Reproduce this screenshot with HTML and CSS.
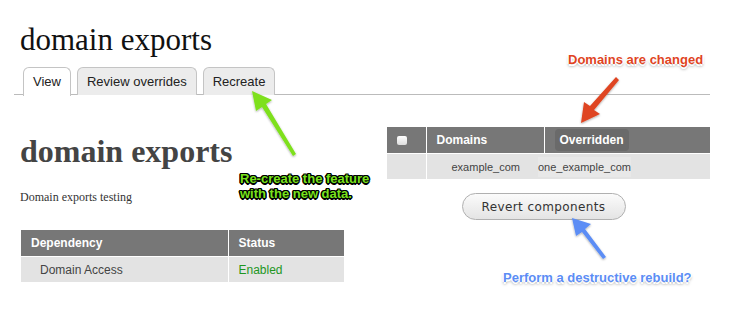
FILE: index.html
```html
<!DOCTYPE html>
<html>
<head>
<meta charset="utf-8">
<link rel="stylesheet" href="styles.css">
</head>
<body>
<div class="page">
  <h1 class="title">domain exports</h1>
  <ul class="tabs">
    <li class="tab active">View</li>
    <li class="tab">Review overrides</li>
    <li class="tab">Recreate</li>
  </ul>
  <div class="content">
    <div class="left">
      <h2 class="heading">domain exports</h2>
      <p class="desc">Domain exports testing</p>
      <table class="dep">
        <colgroup><col class="col-dep"><col></colgroup>
        <thead>
          <tr><th>Dependency</th><th>Status</th></tr>
        </thead>
        <tbody>
          <tr><td class="indent">Domain Access</td><td class="ok">Enabled</td></tr>
        </tbody>
      </table>
    </div>
    <div class="right">
      <table class="comp">
        <colgroup><col class="col-check"><col class="col-domains"><col></colgroup>
        <thead>
          <tr>
            <th><span class="checkbox"></span></th>
            <th>Domains</th>
            <th class="c-over"><span class="over-pill">Overridden</span></th>
          </tr>
        </thead>
        <tbody>
          <tr>
            <td></td>
            <td colspan="2" class="vals"><span class="v1">example_com</span><span class="v2">one_example_com</span></td>
          </tr>
        </tbody>
      </table>
      <div class="actions"><button class="btn">Revert components</button></div>
    </div>
  </div>

  <svg class="arrows" width="732" height="326" viewBox="0 0 732 326">
    <defs>
      <filter id="sh" x="-20%" y="-20%" width="140%" height="140%">
        <feDropShadow dx="0" dy="1" stdDeviation="1" flood-color="#000" flood-opacity="0.35"/>
      </filter>
    </defs>
    <path filter="url(#sh)" fill="#7ee01f" d="M252 91 L272 100 L266 104 L296 154 L293 156 L262 107 L256 111 Z"/>
    <path filter="url(#sh)" fill="#df4521" d="M581 123 L584 102 L590 106 L616 77 L619 80 L594 110 L600 114 Z"/>
    <path filter="url(#sh)" fill="#5b8df5" d="M572 218 L591 224 L585 229 L606 257 L603 259 L582 232 L576 236 Z"/>
  </svg>
  <div class="note note-red">Domains are changed</div>
  <div class="note note-green">Re-create the feature<br>with the new data.</div>
  <div class="note note-blue">Perform a destructive rebuild?</div>
</div>
</body>
</html>
```
FILE: styles.css
```css
html, body {
  margin: 0;
  padding: 0;
  background: #fff;
}
.page {
  position: relative;
  width: 732px;
  height: 326px;
  padding: 0 22px 0 14px;
  box-sizing: border-box;
  font-family: "Liberation Sans", Arial, sans-serif;
  overflow: hidden;
}
.title {
  margin: 0;
  padding: 22px 0 0 6px;
  font-family: "Liberation Serif", "Times New Roman", serif;
  font-weight: normal;
  font-size: 31px;
  line-height: 36px;
  color: #111;
}
.tabs {
  list-style: none;
  margin: 9px 0 0 0;
  padding: 0 0 0 9px;
  display: flex;
  gap: 6px;
  border-bottom: 1px solid #bbb;
  height: 27px;
}
.tab {
  box-sizing: border-box;
  height: 28px;
  padding: 6px 9px 0;
  border: 1px solid #c4c4c4;
  border-bottom: none;
  border-radius: 6px 6px 0 0;
  background: #ececec;
  font-size: 13px;
  color: #222;
}
.tab.active {
  background: #fff;
  height: 29px;
  position: relative;
  z-index: 1;
}
.content {
  display: flex;
  justify-content: space-between;
}
.left {
  padding-left: 6px;
  width: 324px;
}
.heading {
  margin: 38px 0 0;
  font-family: "Liberation Serif", "Times New Roman", serif;
  font-weight: bold;
  font-size: 32px;
  line-height: 36px;
  color: #444;
}
.desc {
  margin: 21px 0 0;
  font-family: "Liberation Serif", "Times New Roman", serif;
  font-size: 12px;
  color: #333;
}
.dep {
  margin-top: 25px;
  margin-left: 1px;
  width: 323px;
  table-layout: fixed;
  border-collapse: collapse;
  font-size: 12px;
}
.col-dep { width: 207px; }
.dep th, .comp th {
  background: #777;
  color: #fff;
  font-weight: bold;
  text-align: left;
  height: 26px;
  padding: 0 10px;
  font-size: 12px;
}
.dep td, .comp td {
  background: #e3e3e3;
  height: 25px;
  padding: 0 10px;
  color: #444;
}
.dep th + th, .dep td + td {
  border-left: 1px solid #fff;
}
.dep tbody tr td {
  border-top: 1px solid #fff;
}
.indent { padding-left: 19px !important; }
.ok { color: #1f961f !important; }
.right {
  width: 323px;
  margin-top: 32px;
}
.comp {
  width: 323px;
  table-layout: fixed;
  border-collapse: collapse;
  font-size: 11px;
}
.col-check { width: 39px; }
.col-domains { width: 118px; }
.comp th + th { border-left: 1px solid #fff; }
.comp tbody td { border-top: 1px solid #fff; }
.comp td.vals { border-left: 1px solid #fff; padding-left: 25px; }
.checkbox {
  display: inline-block;
  width: 10px;
  height: 9px;
  background: linear-gradient(#fff, #ddd);
  border-radius: 2px;
  vertical-align: middle;
}
.over-pill {
  display: inline-block;
  background: #6a6a6a;
  border-radius: 4px;
  padding: 4px 5px;
}
.v1 { margin-right: 18px; }
.v2 {
  background: #e8e8e8;
  padding: 4px 0;
}
.actions {
  text-align: center;
  margin-top: 14px;
  padding-right: 10px;
}
.btn {
  width: 164px;
  height: 27px;
  border: 1px solid #b0b0b0;
  border-radius: 14px;
  background: linear-gradient(#fbfbfb, #e4e4e4);
  font-family: "DejaVu Sans", sans-serif;
  font-size: 12px;
  letter-spacing: 0.4px;
  color: #333;
  padding: 0;
}
.arrows {
  position: absolute;
  left: 0;
  top: 0;
  pointer-events: none;
}
.note {
  position: absolute;
  font-family: "Liberation Sans", Arial, sans-serif;
  font-weight: bold;
  font-size: 13px;
  line-height: 15px;
  white-space: nowrap;
}
.note-red {
  left: 568px;
  top: 52px;
  color: #e0441f;
  text-shadow: -1.5px 0 #fff, 1.5px 0 #fff, 0 -1.5px #fff, 0 1.5px #fff, 0 2px 3px rgba(0,0,0,0.5);
}
.note-green {
  left: 240px;
  top: 171px;
  color: #78e21c;
  text-shadow: -1.5px 0 #000, 1.5px 0 #000, 0 -1.5px #000, 0 1.5px #000, -1px -1px #000, 1px 1px #000, 1px -1px #000, -1px 1px #000;
}
.note-blue {
  left: 503px;
  top: 270px;
  color: #5b8df5;
  text-shadow: -1.5px 0 #fff, 1.5px 0 #fff, 0 -1.5px #fff, 0 1.5px #fff, 0 2px 3px rgba(0,0,0,0.5);
}
```
